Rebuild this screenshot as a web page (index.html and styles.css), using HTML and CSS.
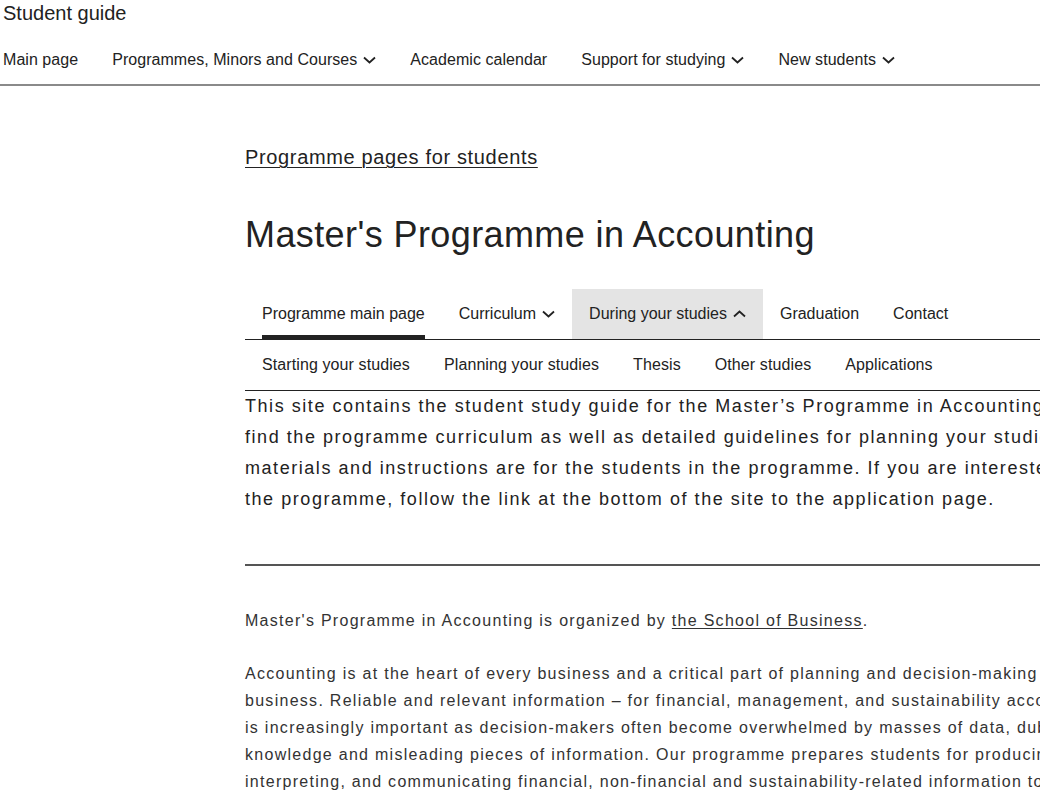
FILE: index.html
```html
<!DOCTYPE html>
<html lang="en">
<head>
<meta charset="utf-8">
<title>Master's Programme in Accounting – Student guide</title>
<link rel="stylesheet" href="styles.css">
</head>
<body>
<header class="site-header">
  <div class="site-title">Student guide</div>
  <nav class="main-nav">
    <a class="nav-item" href="#">Main page</a>
    <a class="nav-item" href="#">Programmes, Minors and Courses <svg class="chev" viewBox="0 0 13 8"><path d="M1 1.5 6.5 6.5 12 1.5"/></svg></a>
    <a class="nav-item" href="#">Academic calendar</a>
    <a class="nav-item" href="#">Support for studying <svg class="chev" viewBox="0 0 13 8"><path d="M1 1.5 6.5 6.5 12 1.5"/></svg></a>
    <a class="nav-item" href="#">New students <svg class="chev" viewBox="0 0 13 8"><path d="M1 1.5 6.5 6.5 12 1.5"/></svg></a>
  </nav>
</header>

<main class="content">
  <a class="breadcrumb" href="#">Programme pages for students</a>
  <h1 class="page-title">Master's Programme in Accounting</h1>

  <nav class="tabs">
    <a class="tab active" href="#">Programme main page</a>
    <a class="tab" href="#">Curriculum <svg class="chev" viewBox="0 0 13 8"><path d="M1 1.5 6.5 6.5 12 1.5"/></svg></a>
    <a class="tab open" href="#">During your studies <svg class="chev" viewBox="0 0 13 8"><path d="M1 6.5 6.5 1.5 12 6.5"/></svg></a>
    <a class="tab" href="#">Graduation</a>
    <a class="tab" href="#">Contact</a>
  </nav>
  <nav class="subtabs">
    <a class="tab" href="#">Starting your studies</a>
    <a class="tab" href="#">Planning your studies</a>
    <a class="tab" href="#">Thesis</a>
    <a class="tab" href="#">Other studies</a>
    <a class="tab" href="#">Applications</a>
  </nav>

  <p class="intro">This site contains the student study guide for the Master’s Programme in Accounting. You find the programme curriculum as well as detailed guidelines for planning your studies. All materials and instructions are for the students in the programme. If you are interested in the programme, follow the link at the bottom of the site to the application page.</p>

  <hr class="divider">

  <p class="body-text">Master's Programme in Accounting is organized by <a href="#">the School of Business</a>.</p>
  <p class="body-text">Accounting is at the heart of every business and a critical part of planning and decision-making in any business. Reliable and relevant information – for financial, management, and sustainability accounting is increasingly important as decision-makers often become overwhelmed by masses of data, dubious knowledge and misleading pieces of information. Our programme prepares students for producing, interpreting, and communicating financial, non-financial and sustainability-related information to various stakeholders and decision-makers.</p>
</main>
</body>
</html>
```

FILE: styles.css
```css
html, body {
  margin: 0;
  padding: 0;
  overflow-x: hidden;
}
body {
  font-family: "Liberation Sans", Arial, sans-serif;
  color: #222;
  background: #fff;
}
a {
  color: inherit;
  text-decoration: none;
}

.site-header {
  border-bottom: 2px solid #8a8a8a;
}
.site-title {
  font-size: 20px;
  line-height: 26px;
  padding-left: 3px;
}
.main-nav {
  display: flex;
  gap: 34px;
  padding: 10px 0 0 3px;
  height: 58px;
  box-sizing: border-box;
  align-items: center;
}
.nav-item {
  font-size: 16px;
  letter-spacing: 0.05px;
  display: flex;
  align-items: center;
  gap: 6px;
  white-space: nowrap;
}
.chev {
  width: 13px;
  height: 8px;
  fill: none;
  stroke: #222;
  stroke-width: 1.8;
}

.content {
  margin-left: 245px;
  width: 861px;
}
.breadcrumb {
  display: inline-block;
  margin-top: 59px;
  font-size: 20px;
  letter-spacing: 0.65px;
  line-height: 24px;
  text-decoration: underline;
  text-underline-offset: 3px;
  text-decoration-thickness: 1px;
}
.page-title {
  font-size: 36px;
  font-weight: normal;
  letter-spacing: 0.4px;
  line-height: 44px;
  margin: 44px 0 32px;
}

.tabs, .subtabs {
  display: flex;
  border-bottom: 1px solid #222;
}
.tab {
  position: relative;
  display: flex;
  align-items: center;
  gap: 6px;
  height: 50px;
  padding: 0 17px;
  font-size: 16px;
  white-space: nowrap;
}
.subtabs .tab {
  letter-spacing: 0.1px;
}
.tabs .tab {
  padding-bottom: 1px;
  height: 49px;
}
.tab.open {
  background: #e4e4e4;
  padding-right: 17px;
}
.tab.active::after {
  content: "";
  position: absolute;
  left: 17px;
  right: 17px;
  bottom: 0;
  height: 4px;
  background: #222;
}

.intro {
  font-size: 18px;
  letter-spacing: 1.55px;
  line-height: 31px;
  margin: 0;
}
.divider {
  border: 0;
  border-top: 2px solid #555;
  margin: 49px 0 0;
}
.body-text {
  font-size: 16px;
  letter-spacing: 1.28px;
  line-height: 27px;
  margin: 41px 0 0;
  color: #333;
}
.body-text + .body-text {
  margin-top: 26px;
}
.body-text a {
  text-decoration: underline;
  text-underline-offset: 2px;
}
```
